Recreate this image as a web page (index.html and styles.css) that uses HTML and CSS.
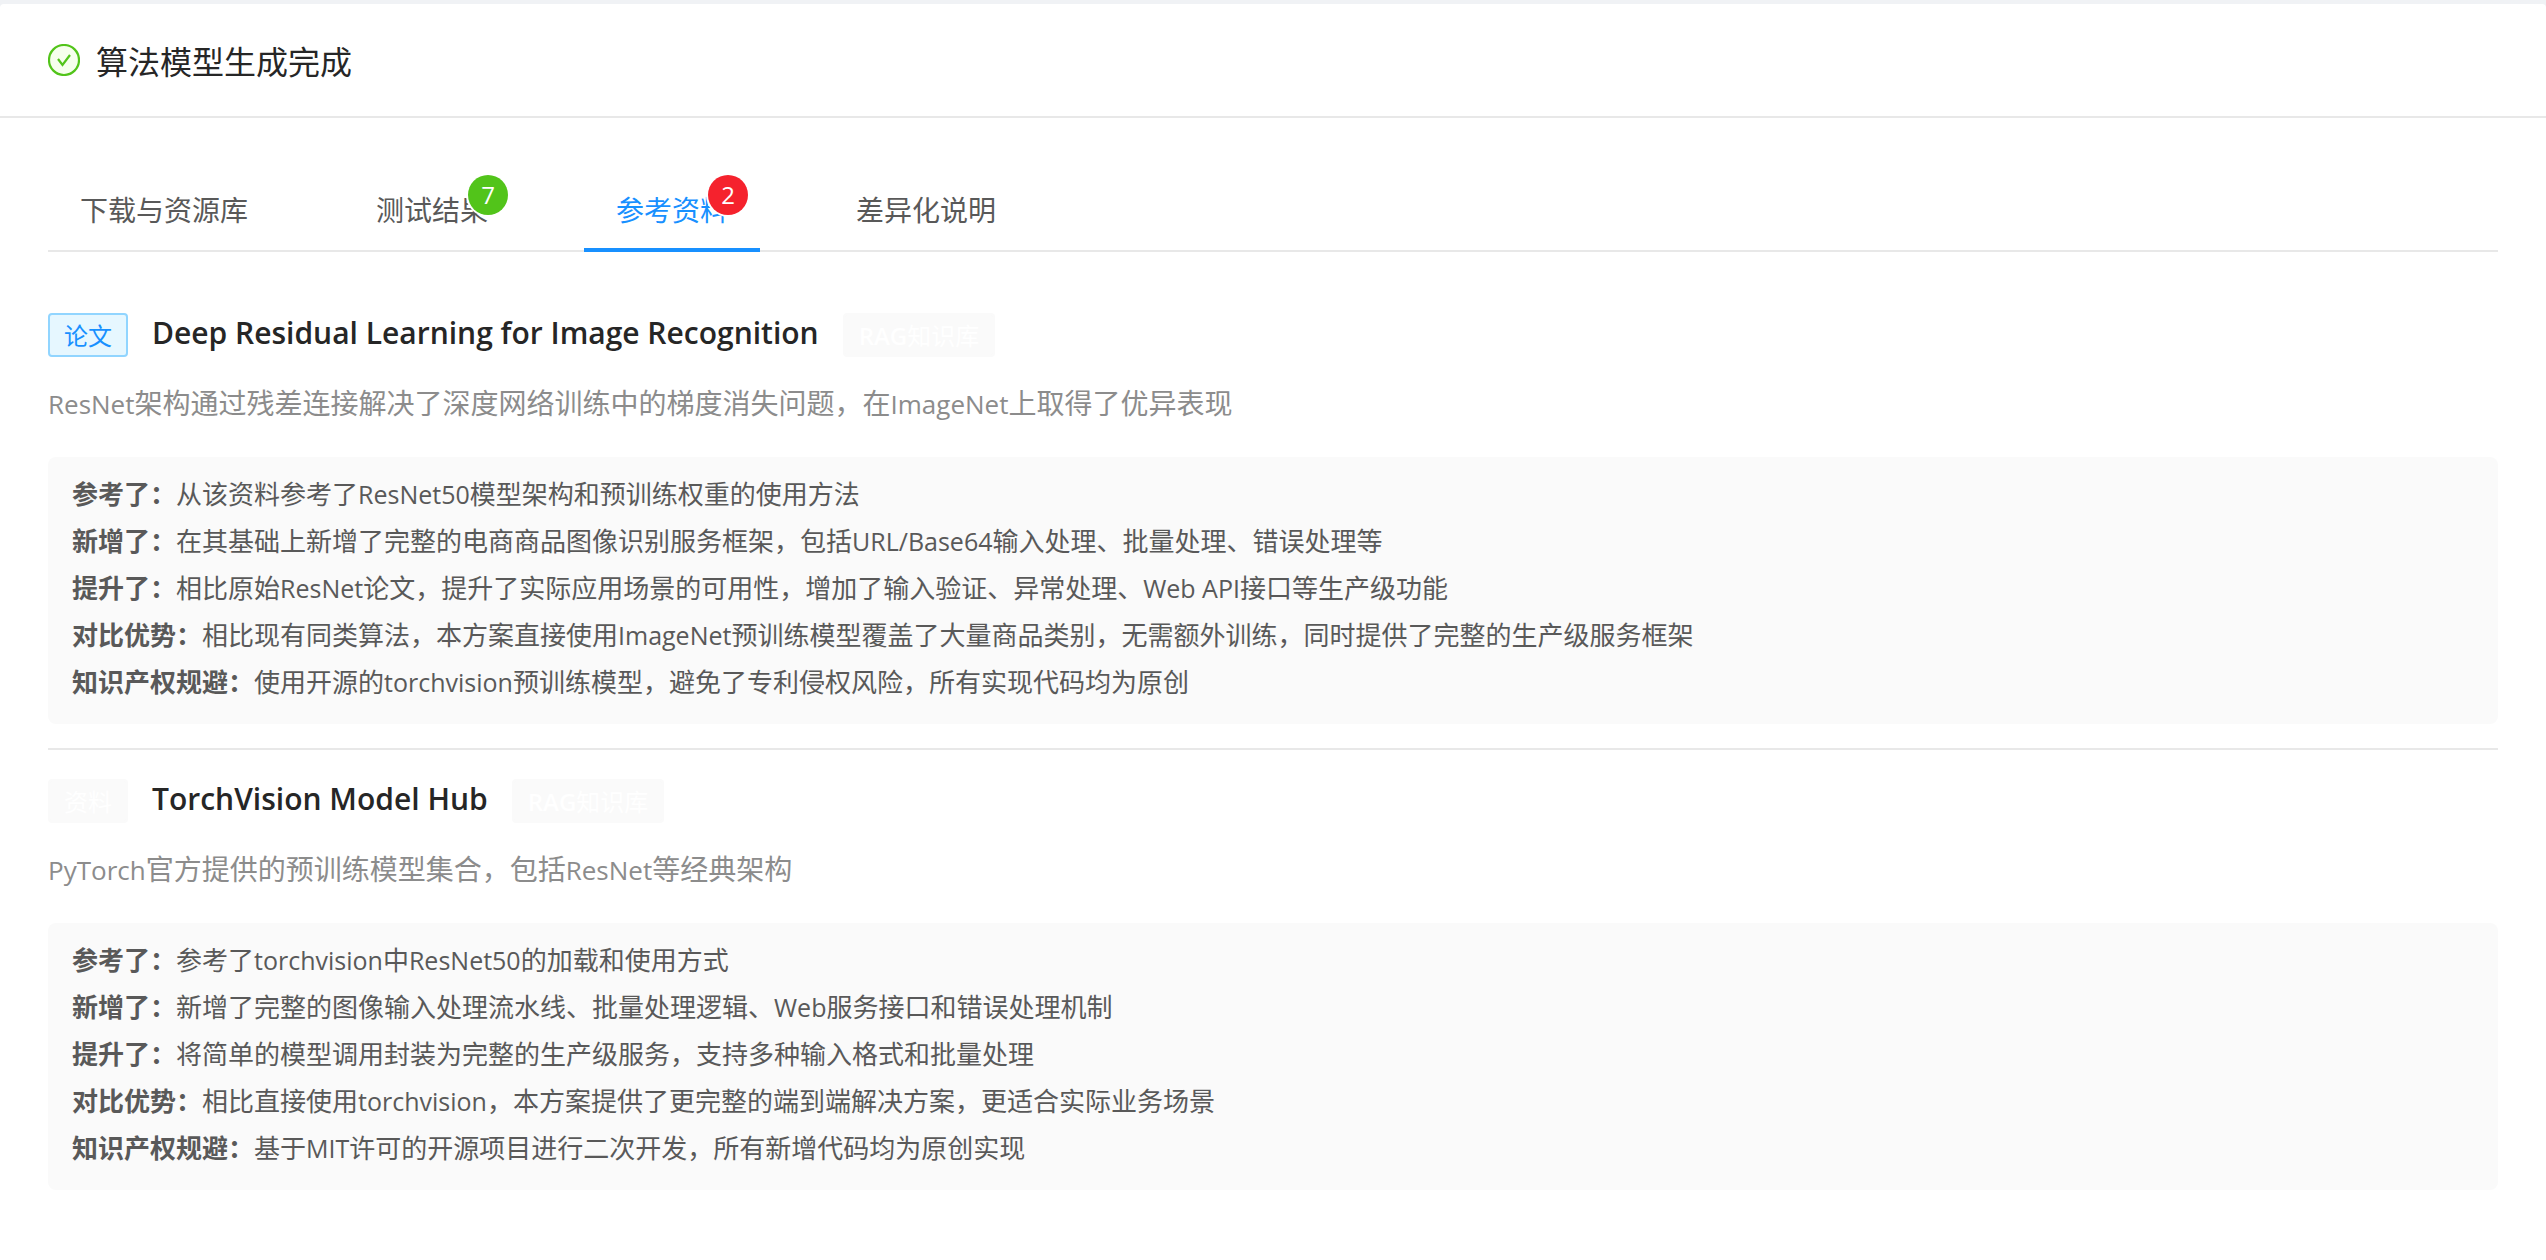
FILE: index.html
```html
<!DOCTYPE html>
<html lang="zh-CN">
<head>
<meta charset="utf-8">
<meta name="viewport" content="width=device-width, initial-scale=1">
<title>算法模型生成完成</title>
<link rel="stylesheet" href="styles.css">
</head>
<body>
<main class="card">
  <header class="card-head">
    <svg class="status-icon" viewBox="0 0 32 32" aria-hidden="true">
      <circle cx="16" cy="16" r="15" fill="#f6ffed" stroke="#52c41a" stroke-width="2.2"/>
      <path d="M10 15l4.5 6L22 11" fill="none" stroke="#52c41a" stroke-width="2.2"/>
    </svg>
    <h1 class="card-title">算法模型生成完成</h1>
  </header>
  <div class="card-body">
    <div class="tabs" role="tablist">
      <button class="tab" type="button" role="tab" aria-selected="false">下载与资源库</button>
      <button class="tab" type="button" role="tab" aria-selected="false"><span class="tab-label">测试结果<span class="badge badge-green">7</span></span></button>
      <button class="tab tab-active" type="button" role="tab" aria-selected="true"><span class="tab-label">参考资料<span class="badge badge-red">2</span></span></button>
      <button class="tab" type="button" role="tab" aria-selected="false">差异化说明</button>
    </div>
    <section class="list" role="tabpanel">
      <article class="item">
        <div class="item-head">
          <span class="tag tag-blue">论文</span>
          <h2 class="item-title">Deep Residual Learning for Image Recognition</h2>
          <span class="tag tag-plain"><span class="en">RAG</span>知识库</span>
        </div>
        <p class="item-desc"><span class="en">ResNet</span>架构通过残差连接解决了深度网络训练中的梯度消失问题，在<span class="en">ImageNet</span>上取得了优异表现</p>
        <div class="notes">
          <p><strong>参考了：</strong>从该资料参考了<span class="en">ResNet50</span>模型架构和预训练权重的使用方法</p>
          <p><strong>新增了：</strong>在其基础上新增了完整的电商商品图像识别服务框架，包括<span class="en">URL/Base64</span>输入处理、批量处理、错误处理等</p>
          <p><strong>提升了：</strong>相比原始<span class="en">ResNet</span>论文，提升了实际应用场景的可用性，增加了输入验证、异常处理、<span class="en">Web API</span>接口等生产级功能</p>
          <p><strong>对比优势：</strong>相比现有同类算法，本方案直接使用<span class="en">ImageNet</span>预训练模型覆盖了大量商品类别，无需额外训练，同时提供了完整的生产级服务框架</p>
          <p><strong>知识产权规避：</strong>使用开源的<span class="en">torchvision</span>预训练模型，避免了专利侵权风险，所有实现代码均为原创</p>
        </div>
      </article>
      <article class="item">
        <div class="item-head">
          <span class="tag tag-plain">资料</span>
          <h2 class="item-title">TorchVision Model Hub</h2>
          <span class="tag tag-plain"><span class="en">RAG</span>知识库</span>
        </div>
        <p class="item-desc"><span class="en">PyTorch</span>官方提供的预训练模型集合，包括<span class="en">ResNet</span>等经典架构</p>
        <div class="notes">
          <p><strong>参考了：</strong>参考了<span class="en">torchvision</span>中<span class="en">ResNet50</span>的加载和使用方式</p>
          <p><strong>新增了：</strong>新增了完整的图像输入处理流水线、批量处理逻辑、<span class="en">Web</span>服务接口和错误处理机制</p>
          <p><strong>提升了：</strong>将简单的模型调用封装为完整的生产级服务，支持多种输入格式和批量处理</p>
          <p><strong>对比优势：</strong>相比直接使用<span class="en">torchvision</span>，本方案提供了更完整的端到端解决方案，更适合实际业务场景</p>
          <p><strong>知识产权规避：</strong>基于<span class="en">MIT</span>许可的开源项目进行二次开发，所有新增代码均为原创实现</p>
        </div>
      </article>
    </section>
  </div>
</main>
</body>
</html>
```
FILE: styles.css
```css
* {
  box-sizing: border-box;
}

body {
  margin: 0;
  padding-top: 4px;
  background: #f0f2f5;
  color: #262626;
  font-family: "Noto Sans CJK SC", sans-serif;
  font-size: 28px;
}

h1, h2, p {
  margin: 0;
}

.card {
  min-height: calc(100vh - 4px);
  background: #fff;
  border-radius: 4px 4px 0 0;
}

.card-head {
  display: flex;
  align-items: center;
  gap: 16px;
  padding: 32px 48px;
  border-bottom: 2px solid #e8e8e8;
}

.status-icon {
  width: 32px;
  height: 32px;
}

.card-title {
  font-size: 32px;
  font-weight: 400;
  line-height: 48px;
}

.card-body {
  padding: 48px;
}

.tabs {
  display: flex;
  gap: 64px;
  border-bottom: 2px solid #e8e8e8;
}

.tab {
  position: relative;
  padding: 25px 32px 23px;
  border: 0;
  background: none;
  color: #595959;
  font: inherit;
  line-height: 36px;
  cursor: pointer;
}

.tab-active {
  color: #1890ff;
}

.tab-active::after {
  content: "";
  position: absolute;
  left: 0;
  right: 0;
  bottom: -2px;
  height: 4px;
  background: #1890ff;
}

.tab-label {
  position: relative;
  display: block;
}

.badge {
  position: absolute;
  top: 4px;
  right: 0;
  height: 40px;
  min-width: 40px;
  border-radius: 20px;
  box-shadow: 0 0 0 2px #fff;
  color: #fff;
  font-family: "Open Sans", sans-serif;
  font-size: 24px;
  line-height: 40px;
  text-align: center;
  transform: translate(50%, -50%);
}

.badge-green {
  background: #52c41a;
}

.badge-red {
  background: #f5222d;
}

.list {
  padding-top: 32px;
}

.item {
  padding: 24px 0;
}

.item + .item {
  border-top: 2px solid #e8e8e8;
}

.item-head {
  display: flex;
  align-items: center;
  height: 54px;
}

.item-title {
  margin: 0 24px;
  padding-bottom: 4px;
  font-family: "Open Sans", sans-serif;
  font-size: 30px;
  font-weight: 600;
  line-height: 48px;
}

.tag {
  padding: 0 14px;
  border: 2px solid;
  border-radius: 4px;
  font-size: 24px;
  line-height: 40px;
}

.tag-blue {
  background: #e6f7ff;
  border-color: #91d5ff;
  color: #1890ff;
}

.tag-plain {
  background: #fafafa;
  border-color: #fafafa;
  color: #fff;
}

/* Latin runs are set a step smaller so they sit evenly beside the Chinese text */
.en {
  font-family: "Open Sans", sans-serif;
  line-height: 1;
}

.tag .en {
  font-size: 24px;
  font-weight: 600;
}

.item-desc {
  margin: 18px 0 33px;
  color: #8c8c8c;
  line-height: 44px;
}

.item-desc .en {
  font-size: 26px;
}

.notes {
  padding: 12px 24px 20px;
  border-radius: 8px;
  background: #fafafa;
  color: #595959;
  font-size: 26px;
  line-height: 47px;
}

.notes .en {
  font-size: 25px;
}
```
